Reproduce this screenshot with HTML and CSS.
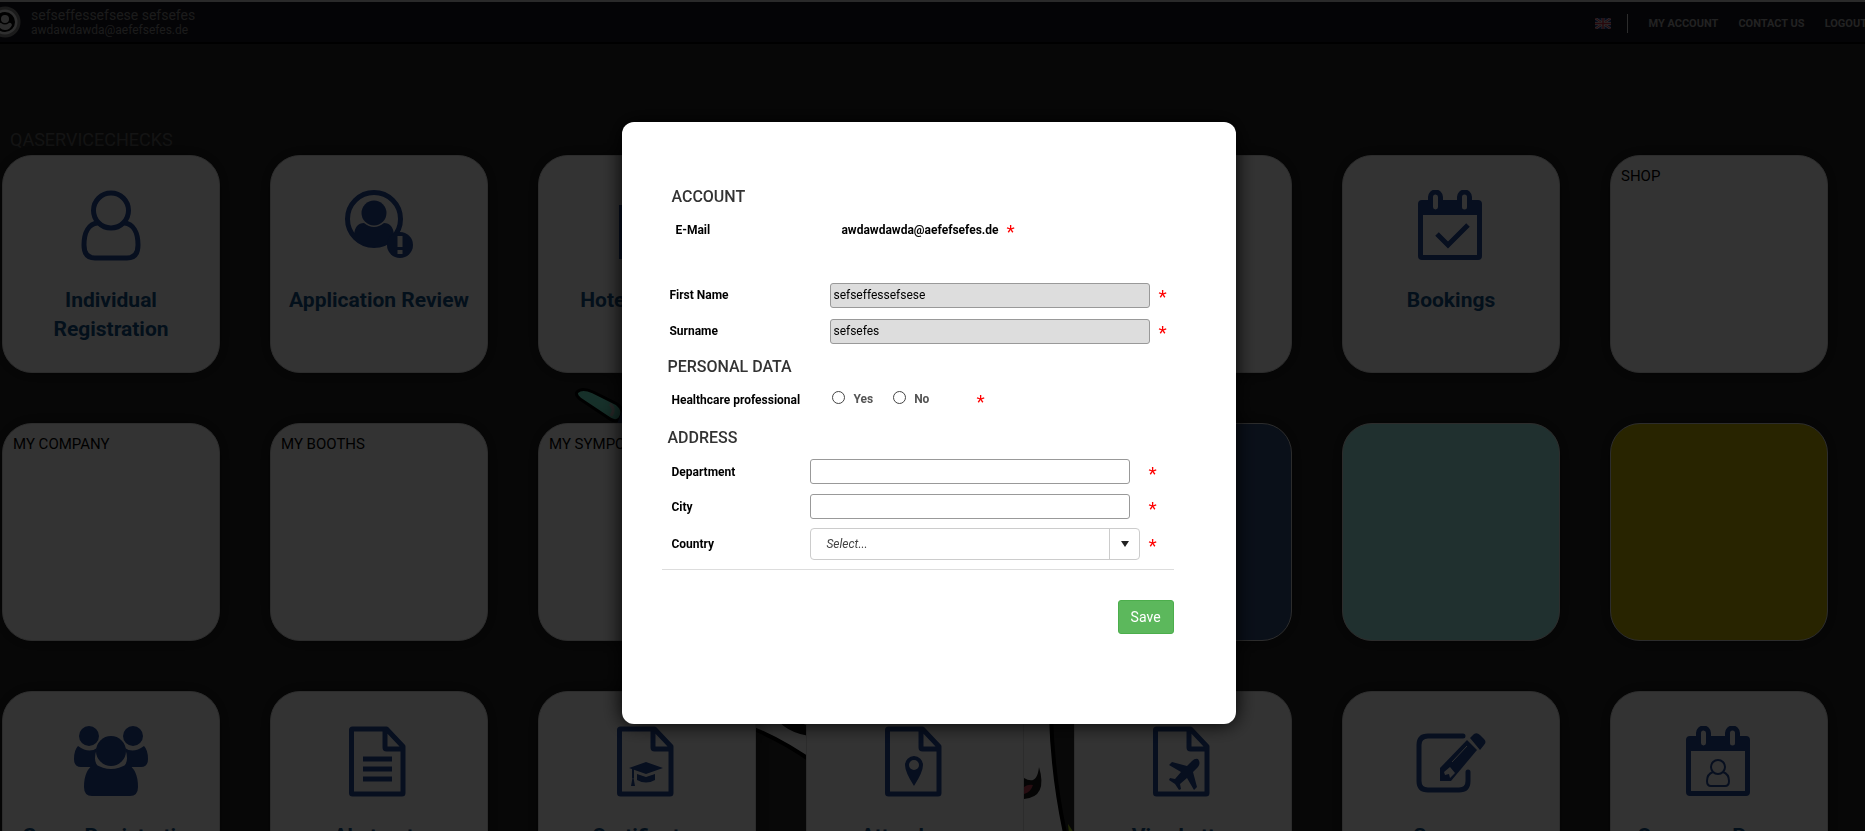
FILE: index.html
```html
<!DOCTYPE html>
<html lang="en">

<head>
  <meta charset="UTF-8">
  <meta name="viewport" content="width=device-width, initial-scale=1.0">
  <title>My Account</title>
  <link rel="stylesheet" href="styles.css">
</head>

<body>
  <!-- Shared icon shapes -->
  <svg class="symbols" aria-hidden="true">
    <symbol id="page" viewBox="0 0 72 72">
      <path d="M8.5 4q0-1 1-1h34L60 20.500v46.500q0 1-1 1H9.500q-1 0-1-1zM42 3v18.500q0 1.500 1.500 1.500H60" fill="none" stroke="currentColor" stroke-width="5" stroke-linejoin="round" />
    </symbol>
    <symbol id="calendar" viewBox="0 0 72 72">
      <path fill="currentColor" fill-rule="evenodd" d="M7 10h6V7a7 7 0 0 1 15 0v3h14V7a7 7 0 0 1 15 0v3h6a4 4 0 0 1 4 4v52a4 4 0 0 1-4 4H7a4 4 0 0 1-4-4V14a4 4 0 0 1 4-4zM8 25v40h54V25zM18 7v10a2.500 2.500 0 0 0 5 0V7a2.500 2.500 0 0 0-5 0zM47 7v10a2.500 2.500 0 0 0 5 0V7a2.500 2.500 0 0 0-5 0z" />
    </symbol>
    <symbol id="person" viewBox="0 0 72 72">
      <g fill="none" stroke="currentColor" stroke-width="5">
        <circle cx="36" cy="20.500" r="17.500" />
        <path d="M22.500 33C14 34 9 42 9 55q0 13 11 13h32q11 0 11-13c0-13-5-21-13.500-22" />
      </g>
    </symbol>
  </svg>

  <header class="topbar">
    <div class="user">
      <svg class="avatar" viewBox="0 0 32 32" aria-hidden="true">
        <circle cx="16" cy="16" r="14" fill="#e8e8e8" stroke="#888" stroke-width="3" />
        <circle cx="16" cy="16" r="10" fill="#050505" />
        <circle cx="16" cy="13" r="4" fill="#ddd" />
        <path d="M9 19q1-3 3-2 4 3 8 0 2-1 3 2-2 5-7 5t-7-5z" fill="#ddd" />
      </svg>
      <div>
        <div class="user-name">sefseffessefsese sefsefes</div>
        <div class="user-mail">awdawdawda@aefefsefes.de</div>
      </div>
    </div>
    <nav class="nav">
      <svg class="flag" viewBox="0 0 16 11" role="img" aria-label="English">
        <path fill="#223a8a" d="M0 0h16v11H0z" />
        <path stroke="#ddd" stroke-width="2.500" d="M0 0l16 11M16 0L0 11" />
        <path stroke="#c8283c" d="M0 0l16 11M16 0L0 11" />
        <path stroke="#ddd" stroke-width="3" d="M8 0v11M0 5.500h16" />
        <path stroke="#c8283c" stroke-width="1.500" d="M8 0v11M0 5.500h16" />
      </svg>
      <span class="nav-line"></span>
      <a href="#">MY ACCOUNT</a>
      <a href="#">CONTACT US</a>
      <a href="#">LOGOUT</a>
    </nav>
  </header>

  <main class="page">
    <!-- Mascot behind the tiles -->
    <svg class="mascot" viewBox="0 0 560 446" aria-hidden="true">
      <path d="M3 5q5-5 16 0l24 12q8 6 3 14-4 6-13-1L6 12Q1 8 3 5z" fill="#70f0d0" stroke="#000" stroke-width="3" />
      <path d="M36 17q6 5 1 12" fill="none" stroke="#ccc" stroke-width="3" />
      <path d="M48 24l6-6 20 4v18H42z" fill="#22356f" />
      <path d="M180 320h70v126h-70z" fill="#2a2a2a" />
      <path d="M180 330h70v52q-36-26-70-40z" fill="#fff" />
      <path d="M201 330q14 20 49 20v-10q-20 0-36-10z" fill="#111" />
      <path d="M180 342q34 14 70 41" fill="none" stroke="#000" stroke-width="4" />
      <path d="M450 330h55v116h-55z" fill="#2a2a2a" />
      <path d="M450 330h27q2 60 15 116h-42z" fill="#fff" />
      <path d="M450 391q13 8 15-11 9 30-15 32z" fill="#191919" />
      <path d="M450 400q4-3 9-2-2 7-9 9z" fill="#c04058" />
      <path d="M477 330q2 60 14 116" fill="none" stroke="#000" stroke-width="4" />
      <path d="M494 437l6 9h-5z" fill="#b0d820" />
    </svg>

    <h1 class="page-title">QASERVICECHECKS</h1>

    <div class="tiles">
      <a class="tile" href="#">
        <svg class="icon"><use href="#person" /></svg>
        <span class="tile-name">Individual Registration</span>
      </a>
      <a class="tile" href="#">
        <svg class="icon" viewBox="0 0 72 72">
          <circle cx="31" cy="29" r="26.500" fill="none" stroke="currentColor" stroke-width="5" />
          <circle cx="31" cy="23" r="12.500" fill="currentColor" />
          <path d="M11 45q1-12 10-12 10 8 20 0 9 0 10 12-8 12-20 12T11 45z" fill="currentColor" />
          <circle cx="57" cy="55" r="13" fill="currentColor" />
          <path d="M57 46v11M57 60v4" stroke="#fff" stroke-width="5" />
        </svg>
        <span class="tile-name">Application Review</span>
      </a>
      <a class="tile" href="#">
        <svg class="icon" viewBox="0 0 72 72"><path d="M8 15h54v54H8z" fill="currentColor" /></svg>
        <span class="tile-name">Hotel Booking</span>
      </a>
      <a class="tile" href="#"></a>
      <a class="tile" href="#"></a>
      <a class="tile" href="#">
        <svg class="icon" viewBox="0 0 72 72">
          <use href="#calendar" />
          <path d="M22 44l11 11 20-20" fill="none" stroke="currentColor" stroke-width="5" stroke-linejoin="miter" />
        </svg>
        <span class="tile-name">Bookings</span>
      </a>
      <a class="tile plain" href="#">SHOP</a>

      <a class="tile plain" href="#">MY COMPANY</a>
      <a class="tile plain" href="#">MY BOOTHS</a>
      <a class="tile plain" href="#">MY SYMPOSIA</a>
      <a class="tile" href="#"></a>
      <a class="tile blue" href="#"></a>
      <a class="tile teal" href="#"></a>
      <a class="tile olive" href="#"></a>

      <a class="tile" href="#">
        <svg class="icon wide" viewBox="0 0 76 72">
          <g fill="currentColor">
            <ellipse cx="16" cy="10" rx="10" ry="10" />
            <ellipse cx="60" cy="10" rx="10" ry="10" />
            <path d="M5 20q11 8 19 2-4 12 0 17-3 1-3 2H8q-7 0-7-8 0-9 4-13zM71 20q-11 8-19 2 4 12 0 17 3 1 3 2h13q7 0 7-8 0-9-4-13z" />
            <ellipse cx="38" cy="25" rx="15" ry="15" />
            <path d="M22 38q16 10 32 0 11 5 11 23 0 9-8 9H19q-8 0-8-9 0-18 11-23z" />
          </g>
        </svg>
        <span class="tile-name">Group Registration</span>
      </a>
      <a class="tile" href="#">
        <svg class="icon" viewBox="0 0 72 72">
          <use href="#page" />
          <path d="M20 33h29M20 43h29M20 53h29" stroke="currentColor" stroke-width="5" />
        </svg>
        <span class="tile-name">Abstracts</span>
      </a>
      <a class="tile" href="#">
        <svg class="icon" viewBox="0 0 72 72">
          <use href="#page" />
          <path d="M18 42l17-6 17 6-17 6zM26 48l9 3 9-3v6q-9 5-18 0z" fill="currentColor" />
          <path d="M22 43v9" stroke="currentColor" stroke-width="2" />
          <path d="M22 49l-2 11h4z" fill="currentColor" />
        </svg>
        <span class="tile-name">Certificates</span>
      </a>
      <a class="tile square" href="#">
        <svg class="icon" viewBox="0 0 72 72">
          <use href="#page" />
          <path fill="currentColor" fill-rule="evenodd" d="M35 60q-9-14-9-21a9 9 0 0 1 18 0q0 7-9 21zM35 34a5 5 0 0 0 0 10 5 5 0 0 0 0-10z" />
        </svg>
        <span class="tile-name">Attendance</span>
      </a>
      <a class="tile square-left" href="#">
        <svg class="icon" viewBox="0 0 72 72">
          <use href="#page" />
          <path fill="currentColor" d="M51 33q-3-1-6 2l-5 5-15-4-3 3 12 7-6 7-5-1-1 2 6 4 4 6 2-1-1-5 7-6 7 12 3-3-4-15 5-5q3-4 0-8z" />
        </svg>
        <span class="tile-name">Visa Letter</span>
      </a>
      <a class="tile" href="#">
        <svg class="icon wide" viewBox="0 0 76 72">
          <path d="M50 10H15q-9 0-9 9v36q0 9 9 9h31q9 0 9-9V46" fill="none" stroke="currentColor" stroke-width="5" stroke-linecap="round" />
          <path d="M27 42l27-28 10 10-26 31H27z" fill="currentColor" />
          <path d="M57 12l4-4q3-2 6 1l4 4q3 3 0 6l-4 5z" fill="currentColor" />
          <path d="M31 46l6-5 5 6-5 5-1-4-4 1z" fill="#fff" />
          <path d="M39 36l15-16" stroke="#fff" />
        </svg>
        <span class="tile-name">Surveys</span>
      </a>
      <a class="tile" href="#">
        <svg class="icon" viewBox="0 0 72 72">
          <use href="#calendar" />
          <g fill="none" stroke="currentColor" stroke-width="2">
            <circle cx="35" cy="41" r="7" />
            <path d="M30 46q-6 2-6 9 0 5 4 5h14q4 0 4-5 0-7-6-9" />
          </g>
        </svg>
        <span class="tile-name">Congress Passes</span>
      </a>
    </div>
  </main>

  <div class="overlay">
    <form class="modal">
      <h2 class="indent">ACCOUNT</h2>
      <div class="row mail-row">
        <span class="label">E-Mail</span>
        <span class="mail">awdawdawda@aefefsefes.de</span>
        <span class="req">*</span>
      </div>

      <div class="row name-row">
        <label for="first-name">First Name</label>
        <input class="field" type="text" id="first-name" value="sefseffessefsese" readonly>
        <span class="req">*</span>
      </div>
      <div class="row name-row">
        <label for="surname">Surname</label>
        <input class="field" type="text" id="surname" value="sefsefes" readonly>
        <span class="req">*</span>
      </div>

      <h2 class="personal">PERSONAL DATA</h2>
      <div class="row radio-row" role="radiogroup" aria-labelledby="hcp">
        <span class="label" id="hcp">Healthcare professional</span>
        <input type="radio" name="hcp" id="hcp-yes">
        <label for="hcp-yes">Yes</label>
        <input type="radio" name="hcp" id="hcp-no">
        <label for="hcp-no">No</label>
        <span class="req">*</span>
      </div>

      <h2 class="address">ADDRESS</h2>
      <div class="row">
        <label for="department">Department</label>
        <input class="field" type="text" id="department">
        <span class="req">*</span>
      </div>
      <div class="row">
        <label for="city">City</label>
        <input class="field" type="text" id="city">
        <span class="req">*</span>
      </div>
      <div class="row country-row">
        <label for="country">Country</label>
        <div class="select-box">
          <select id="country">
            <option>Select...</option>
          </select>
          <svg class="arrow" viewBox="0 0 8 6" aria-hidden="true"><path d="M0 0h8L4 6z" fill="#222" /></svg>
        </div>
        <span class="req">*</span>
      </div>

      <div class="modal-footer">
        <button type="submit" class="save-btn">Save</button>
      </div>
    </form>
  </div>
</body>

</html>
```
FILE: styles.css
```css
* {
  box-sizing: border-box;
}

body {
  margin: 0;
  height: 100vh;
  overflow: hidden;
  background-color: #262626;
  border-top: 2px solid #d0d0d0;
  font-family: Roboto, Arial, sans-serif;
  color: #000;
}

a {
  color: inherit;
  text-decoration: none;
}

.symbols {
  position: absolute;
  width: 0;
  height: 0;
}

/* Top bar */
.topbar {
  display: flex;
  justify-content: space-between;
  align-items: center;
  height: 42px;
  background-color: #15151f;
  border-bottom: 2px solid #000;
}

.user {
  display: flex;
  align-items: center;
  gap: 10px;
  margin-left: -11px;
  color: #888;
}

.avatar {
  width: 32px;
  height: 32px;
}

.user-name {
  font-size: 14px;
  line-height: 16px;
}

.user-mail {
  font-size: 12px;
  line-height: 14px;
}

.nav {
  display: flex;
  align-items: center;
  gap: 20px;
  margin-right: -2px;
  padding-top: 2px;
  font-size: 11px;
  font-weight: 700;
  color: #aaa;
}

.flag {
  width: 16px;
  height: 11px;
  margin-right: -4px;
}

.nav-line {
  width: 1px;
  height: 19px;
  background-color: #ddd;
}

/* Tiles */
.page {
  position: relative;
  padding: 84px 0 0 2px;
}

.mascot {
  position: absolute;
  left: 574px;
  top: 343px;
  width: 560px;
  height: 446px;
}

.page-title {
  margin: 0 0 4px 8px;
  font-size: 18px;
  line-height: 23px;
  font-weight: 400;
  color: #646464;
}

.tiles {
  position: relative;
  display: grid;
  grid-template-columns: repeat(7, 218px);
  gap: 50px;
}

.tile {
  display: flex;
  flex-direction: column;
  align-items: center;
  height: 218px;
  padding: 34px 10px 0;
  border: 1px solid #ddd;
  border-radius: 30px;
  background-color: #fff;
  box-shadow: 0 0 20px rgba(0, 0, 0, 0.5);
  color: #234a9c;
}

.plain {
  align-items: flex-start;
  padding-top: 11px;
  font-size: 15px;
  line-height: 19px;
  color: #000;
}

.blue {
  background-color: #34507f;
}

.teal {
  background-color: #a0f0e8;
}

.olive {
  background-color: #c8b400;
}

.square {
  border-radius: 0;
  box-shadow: none;
}

.square-left {
  border-radius: 0 30px 0 0;
  box-shadow: none;
}

.icon {
  width: 72px;
  height: 72px;
}

.wide {
  width: 76px;
}

.tile-name {
  margin-top: 24px;
  font-size: 21px;
  line-height: 29px;
  font-weight: 700;
  text-align: center;
  color: #135086;
}

/* Account dialog */
.overlay {
  position: fixed;
  inset: 0;
  display: flex;
  justify-content: center;
  align-items: center;
  padding: 15px 7px 0 0;
  background-color: rgba(0, 0, 0, 0.8);
}

.modal {
  width: 33%;
  min-width: 600px;
  padding: 64px 62px 90px 40px;
  border-radius: 12px;
  background-color: #fff;
  box-shadow: 0 0 20px #000;
  font-size: 12px;
}

h2 {
  margin: 0;
  padding: 0 5px;
  font-size: 16px;
  line-height: 22px;
  font-weight: 500;
  color: #333;
}

.indent {
  padding-left: 9px;
}

.personal {
  margin-top: 7px;
}

.address {
  margin: 5px 0;
}

.row {
  display: flex;
  align-items: center;
  height: 35px;
  padding-left: 9px;
}

.row > label:first-child,
.label {
  width: 139px;
  font-weight: 700;
  color: #000;
}

.field {
  width: 320px;
  height: 25px;
  padding: 0 2px;
  border: 1px solid #999;
  border-radius: 3px;
  background-color: #fff;
  font-family: inherit;
  font-size: 12px;
}

.field:read-only {
  background-color: #ddd;
}

.req {
  margin-left: 18px;
  font-size: 19px;
  line-height: 20px;
  height: 16px;
  color: #f00;
}

.mail-row {
  height: 44px;
  margin-bottom: 25px;
  padding-left: 13px;
}

.mail-row .label {
  width: 166px;
}

.mail {
  font-weight: 700;
}

.mail-row .req,
.name-row .req,
.country-row .req {
  margin-left: 8px;
}

.name-row {
  height: 36px;
  padding-left: 7px;
}

.name-row > label:first-child {
  width: 161px;
}

.radio-row {
  height: 44px;
}

.radio-row .label {
  width: 161px;
}

.radio-row input {
  appearance: none;
  width: 13px;
  height: 13px;
  margin: 0 8px 6px 0;
  border: 1px solid #444;
  border-radius: 50%;
}

.radio-row label {
  margin: 0 20px 2px 0;
  font-weight: 700;
  color: #555;
}

.radio-row .req {
  margin-left: 27px;
}

.select-box {
  position: relative;
  width: 330px;
}

.select-box select {
  appearance: none;
  width: 100%;
  height: 32px;
  padding: 0 15px;
  border: 1px solid #ccc;
  border-radius: 4px;
  background: linear-gradient(#ccc, #ccc) right 29px top / 1px 100% no-repeat #fff;
  font-family: inherit;
  font-size: 12px;
  font-style: italic;
  color: #444;
}

.arrow {
  position: absolute;
  right: 11px;
  top: 13px;
  width: 8px;
  height: 6px;
  pointer-events: none;
}

.country-row {
  height: 40px;
}

.modal-footer {
  display: flex;
  justify-content: flex-end;
  margin-top: 5px;
  padding-top: 30px;
  border-top: 1px solid #ddd;
}

.save-btn {
  height: 34px;
  padding: 0 12px;
  border: 1px solid #4cae4c;
  border-radius: 3px;
  background-color: #5cb85c;
  font-family: inherit;
  font-size: 14px;
  color: #fff;
  cursor: pointer;
}
```
